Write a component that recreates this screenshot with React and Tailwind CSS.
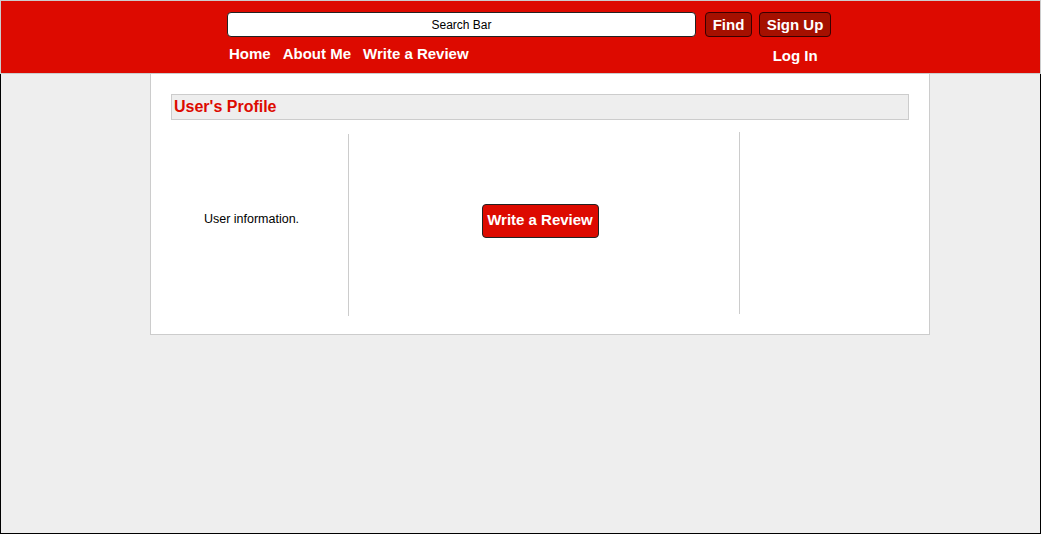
export default function App() {
  return (
    <div className="flex h-[534px] w-[1041px] flex-col bg-[#eeeeee]" style={{ fontFamily: '"Liberation Sans", Arial, sans-serif' }}>
      <header className="h-[74px] shrink-0 border border-[#cccccc] bg-[#dd0a00]">
        <div className="ml-[226px] flex w-[605px] flex-col">
          <div className="mt-[11px] flex items-center">
            <div className="flex h-[25px] w-[469px] items-center justify-center rounded-[4px] border border-[#222] bg-white text-[12px] text-black">
              Search Bar
            </div>
            <button className="ml-[9px] flex h-[25px] w-[47px] items-center justify-center rounded-[4px] border border-[#3a0000] bg-[#a51000] pt-[1px] text-[15px] font-bold text-white">
              Find
            </button>
            <button className="ml-[7px] flex h-[25px] w-[72px] items-center justify-center rounded-[4px] border border-[#3a0000] bg-[#a51000] pt-[1px] text-[15px] font-bold text-white">
              Sign Up
            </button>
          </div>
          <div className="mt-[6px] flex items-start text-[15px] font-bold text-white">
            <span className="ml-[2px]">Home</span>
            <span className="ml-[12px]">About Me</span>
            <span className="ml-[12px]">Write a Review</span>
            <span className="ml-[304px] mt-[2px]">Log In</span>
          </div>
        </div>
      </header>
      <div className="flex flex-1 border-x border-b border-black">
        <div className="ml-[149px] flex h-[261px] w-[780px] flex-col border-x border-b border-[#cccccc] bg-white px-[20px] pt-[20px]">
          <div className="flex h-[26px] items-center border border-[#cccccc] bg-[#eeeeee] pl-[2px] text-[16px] font-bold text-[#dd0a00]">
            User's Profile
          </div>
          <div className="flex items-start">
            <div className="mt-[14px] flex h-[182px] w-[178px] items-center justify-start border-r border-[#cccccc] pb-[12px]">
              <span className="w-[161px] text-center text-[12.5px] text-black">User information.</span>
            </div>
            <div className="mt-[12px] flex h-[182px] w-[391px] items-center justify-center border-r border-[#cccccc] pr-[8px]">
              <button className="-mt-[5px] flex h-[34px] w-[117px] items-center justify-center rounded-[4px] border border-[#222] bg-[#dd0a00] text-[15px] font-bold text-white">
                Write a Review
              </button>
            </div>
            <div className="flex-1" />
          </div>
        </div>
      </div>
    </div>
  );
}
